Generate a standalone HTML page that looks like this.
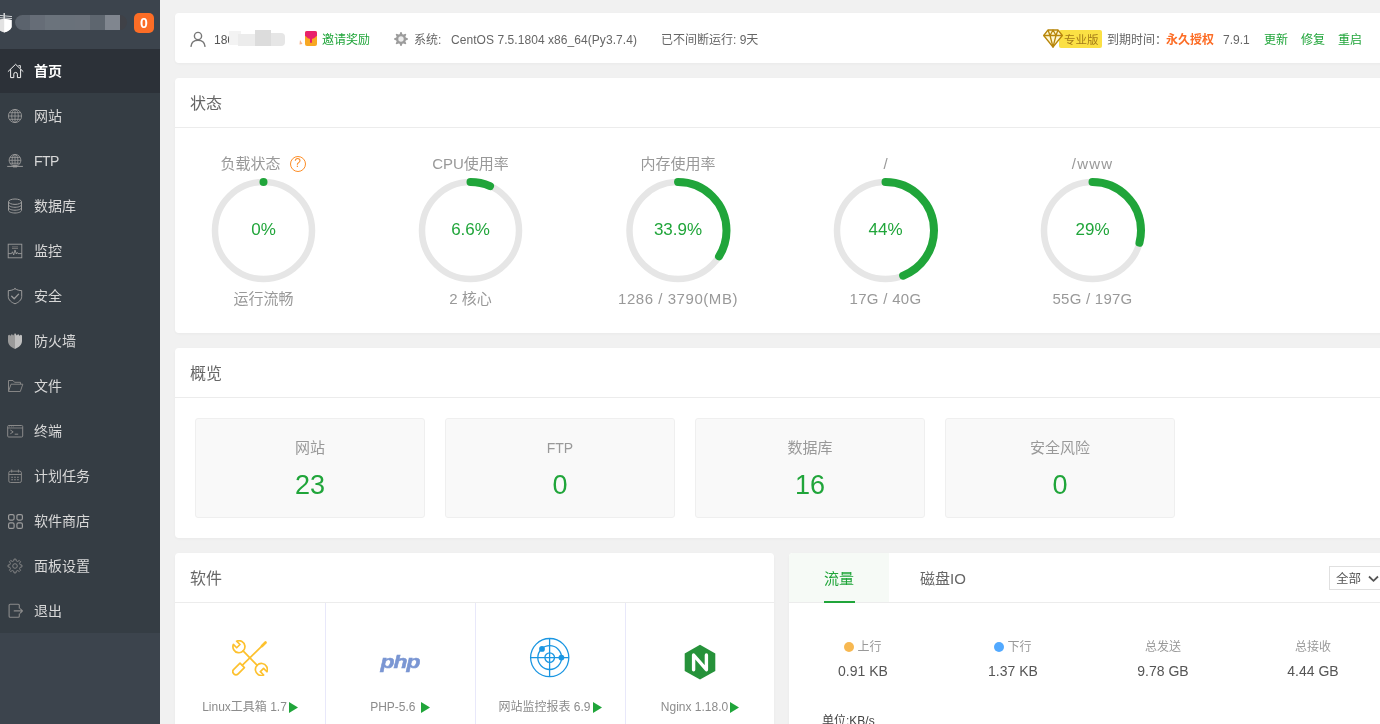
<!DOCTYPE html>
<html lang="zh-CN">
<head>
<meta charset="utf-8">
<title>宝塔Linux面板</title>
<style>
*{box-sizing:border-box;margin:0;padding:0}
html,body{width:1380px;height:724px;overflow:hidden;background:#f1f1f1}
body{font-family:"Liberation Sans","Noto Sans CJK SC",sans-serif;font-size:12px;color:#666;position:relative}
a{text-decoration:none;color:inherit}
.abs{position:absolute}
/* sidebar */
#side{position:absolute;left:0;top:0;width:160px;height:724px;background:#3c444d}
#side .hd{position:absolute;left:0;top:0;width:160px;height:49px;background:#3c444d}
#side ul{position:absolute;left:0;top:49px;width:160px;list-style:none;background:#353d44;height:584px}
#side li{height:44px;margin-bottom:1px;line-height:44px;position:relative;color:#d8d8d8;font-size:14px;padding-left:34px;white-space:nowrap}
#side li.on{background:#2c3138;color:#fff;font-weight:bold}
#side li svg{position:absolute;left:7px;top:14px;width:16px;height:16px;overflow:visible}
#side .hd i{position:absolute;top:0;height:15px;display:block}
.badge{position:absolute;left:134px;top:13px;width:20px;height:20px;border-radius:5px;background:#fc6d26;color:#fff;font-weight:bold;font-size:14px;line-height:20px;text-align:center}
/* cards */
.card{position:absolute;background:#fff;border-radius:4px;box-shadow:0 1px 3px rgba(0,0,0,.035)}
.card .tt{position:absolute;left:0;top:0;right:0;height:50px;border-bottom:1px solid #ececec;font-size:16px;color:#666;line-height:52px;padding-left:15px}
.g{color:#20a53a}
.t12{font-size:12px;white-space:nowrap;color:#666}
.t12.g{color:#20a53a}

.gt,.gb,.gp{position:absolute;width:200px;text-align:center;white-space:nowrap}
.gt{font-size:15px;color:#999;line-height:22px}
.gb{font-size:15px;color:#999;line-height:22px}
.gp{font-size:17px;color:#20a53a;line-height:30px}
.qm{position:absolute;left:126px;top:3px;width:16px;height:16px;border:1.300px solid #fc8d26;border-radius:50%;color:#fc8d26;font-size:12px;line-height:13.500px;text-align:center}
.ob{position:absolute;top:70px;width:230px;height:100px;background:#f9f9f9;border:1px solid #efefef;border-radius:3px;text-align:center}
.ob .a{font-size:15px;color:#999;line-height:20px;margin-top:19px}
.ob .b{font-size:27px;color:#20a53a;line-height:30px;margin-top:12px}

.sc{position:absolute;top:50px;width:151px;height:250px;border-right:1px solid #e8e8fa}
.sn{position:absolute;left:0;top:95px;width:150px;text-align:center;font-size:12px;line-height:18px;color:#8c8c8c;white-space:nowrap}
.tri{display:inline-block;vertical-align:-1.500px;margin-left:2px}
.nc{position:absolute;top:85px;width:148px;text-align:center;white-space:nowrap}
.nc .a{font-size:12px;line-height:18px;color:#999}
.nc .a i{display:inline-block;width:10px;height:10px;border-radius:50%;margin-right:3px;vertical-align:-0.500px}
.nc .b{font-size:14px;line-height:20px;color:#555;margin-top:4.500px}
</style>
</head>
<body><div id="wrap" style="position:absolute;left:0;top:0;width:1380px;height:724px;will-change:transform">
<div id="side">
  <div class="hd">
    <svg class="abs" style="left:0;top:13px" width="12" height="20" viewBox="0 0 12 20"><path d="M-4 6.800l8.200-1 7.400 1.200v6.500c0 2.600-3.300 4.700-7.400 6-4.100-1.300-8.200-3.400-8.200-6z" fill="#e2e2e2"/><path d="M4.200 5.800l7.400 1.200v6.500c0 2.600-3.300 4.700-7.400 6z" fill="#fff"/><path d="M4.200 0v6" stroke="#f0f0f0" stroke-width="1.300" fill="none"/><path d="M-2 2.200l14 1.400M-2 4.600l14 1" stroke="#cfd2d5" stroke-width="1" fill="none"/></svg>
    <div class="abs" style="left:15px;top:15px;width:112px;height:15px;border-radius:8px;overflow:hidden;background:#3f4147">
      <i style="left:0;width:15px;background:#5b636d"></i><i style="left:15px;width:15px;background:#666d77"></i><i style="left:30px;width:15px;background:#6b737c"></i><i style="left:45px;width:15px;background:#69717a"></i><i style="left:60px;width:15px;background:#6a717a"></i><i style="left:75px;width:15px;background:#5e666f"></i><i style="left:90px;width:15px;background:#80868f"></i>
    </div>
  </div>
  <div class="badge">0</div>
  <ul>
    <li class="on"><svg viewBox="0 0 16 16" fill="none" stroke="#f2f2f2" stroke-width="1" stroke-linejoin="round" stroke-linecap="round"><path d="M1.200 8.400L8.600 1.300 16 8.400"/><path d="M3.600 6.600v8h3.200v-3.400a1.800 1.800 0 0 1 3.600 0v3.400h3.200v-8"/><path d="M11.800 2.600h1.600v2.200" stroke-width=".9"/></svg>首页</li>
    <li><svg viewBox="0 0 16 16" fill="none" stroke="#9b9b9b" stroke-width=".85"><circle cx="8" cy="8" r="6.600"/><ellipse cx="8" cy="8" rx="3.300" ry="6.600"/><path d="M8 1.400v13.200M1.400 8h13.200M2.400 4.700h11.200M2.400 11.300h11.200"/></svg>网站</li>
    <li><svg viewBox="0 0 16 16" fill="none" stroke="#9b9b9b" stroke-width=".85"><circle cx="8" cy="7.300" r="5.900"/><ellipse cx="8" cy="7.300" rx="2.900" ry="5.900"/><path d="M8 1.400v11.800M2.100 7.300h11.800M3 4.400h10M3 10.200h10"/><path d="M.2 13.400h15.700" stroke-width="1"/><rect x="6" y="12.400" width="4" height="2" fill="#9b9b9b" stroke="none"/></svg><span style="letter-spacing:-.6px">FTP</span></li>
    <li><svg viewBox="0 0 16 16" fill="none" stroke="#9b9b9b" stroke-width="1"><ellipse cx="8" cy="3.700" rx="6.500" ry="2.700"/><path d="M1.500 3.700v8.600c0 1.500 2.900 2.700 6.500 2.700s6.500-1.200 6.500-2.700V3.700"/><path d="M1.500 6.600c0 1.500 2.900 2.700 6.500 2.700s6.500-1.200 6.500-2.700M1.500 9.500c0 1.500 2.900 2.700 6.500 2.700s6.500-1.200 6.500-2.700"/></svg>数据库</li>
    <li><svg viewBox="0 0 16 16" fill="none" stroke="#9b9b9b" stroke-width=".9"><rect x="1.200" y="1.200" width="13.600" height="13.600"/><path d="M1.200 10.600h3.300l1-1.800 1.200 3.200 1.300-5 1.300 4 .9-1.600.8 1.200h3.800" stroke-linejoin="round"/><path d="M5 3.900h6M5 5.500h6" stroke="#777"/></svg>监控</li>
    <li><svg viewBox="0 0 16 16" fill="none" stroke="#9b9b9b" stroke-width="1" stroke-linejoin="round" stroke-linecap="round"><path d="M8 .7C6 2.100 3.500 2.600 1.300 2.600v5.900c0 3.500 3.200 6 6.700 7.300 3.500-1.300 6.700-3.800 6.700-7.300V2.600C12.500 2.600 10 2.100 8 .7z"/><path d="M4.700 8.300l2.500 2.400 4.400-4.600" stroke-width="1.300"/></svg>安全</li>
    <li><svg viewBox="0 0 16 16"><path d="M8 0v16C4 14.200 1 11.700 1 8V2.600l1.300-.9 1.200 1 1.300-1.600 1.400 1.300z" fill="#9a9a9a"/><path d="M8 0v16c4-1.800 7-4.300 7-8V2.600l-1.300-.9-1.200 1-1.300-1.600-1.400 1.300z" fill="#bfbfbf"/></svg>防火墙</li>
    <li><svg viewBox="0 0 16 16" fill="none" stroke="#858585" stroke-width="1" stroke-linejoin="round"><path d="M1.500 13.500v-11H6l1.500 1.800h6V6.200"/><path d="M1.500 13.500L4 6.200h11.800l-2.500 7.300z"/></svg>文件</li>
    <li><svg viewBox="0 0 16 16" fill="none" stroke="#8a8a8a" stroke-width="1" stroke-linejoin="round"><rect x=".7" y="2.500" width="15" height="11.500" rx="1"/><path d="M.7 5h15" stroke-width=".8"/><path d="M3.300 7l2.900 1.900-2.900 1.900M7.700 11.200h3.500" stroke-width="1"/><path d="M2.200 3.800h.8M4 3.800h.8M5.800 3.800h.8" stroke-width=".7"/></svg>终端</li>
    <li><svg viewBox="0 0 16 16" fill="none" stroke="#858585" stroke-width="1"><rect x="1.800" y="3.200" width="12.600" height="11.300" rx="1.600"/><path d="M4.700 1.600v3M11.400 1.600v3M1.800 6.500h12.600" /><path d="M4.200 9.200h1.800M7.100 9.200h1.800M10 9.200h1.800M4.200 11.800h1.800M7.100 11.800h1.800M10 11.800h1.800" stroke-width="1.100"/></svg>计划任务</li>
    <li><svg viewBox="0 0 16 16" fill="none" stroke="#9b9b9b" stroke-width="1.200"><rect x="1.600" y="1.600" width="5.500" height="5.500" rx="1.500"/><rect x="9.900" y="1.600" width="5.500" height="5.500" rx="1.500"/><rect x="1.600" y="9.900" width="5.500" height="5.500" rx="1.500"/><rect x="9.900" y="9.900" width="5.500" height="5.500" rx="1.500"/></svg>软件商店</li>
    <li><svg viewBox="0 0 16 16" fill="none" stroke="#8a8a8a" stroke-width=".9" stroke-linejoin="round"><path d="M7.07 1.06 L8.93 1.06 L9.24 2.85 L10.77 3.48 L12.25 2.44 L13.56 3.75 L12.52 5.23 L13.15 6.76 L14.94 7.07 L14.94 8.93 L13.15 9.24 L12.52 10.77 L13.56 12.25 L12.25 13.56 L10.77 12.52 L9.24 13.15 L8.93 14.94 L7.07 14.94 L6.76 13.15 L5.23 12.52 L3.75 13.56 L2.44 12.25 L3.48 10.77 L2.85 9.24 L1.06 8.93 L1.06 7.07 L2.85 6.76 L3.48 5.23 L2.44 3.75 L3.75 2.44 L5.23 3.48 L6.76 2.85z"/><circle cx="8" cy="8" r="2.300"/></svg>面板设置</li>
    <li><svg viewBox="0 0 16 16" fill="none" stroke="#8a8a8a" stroke-width="1.100" stroke-linejoin="round" stroke-linecap="round"><path d="M12.300 5.200V2.300a1 1 0 0 0-1-1H3.100a1 1 0 0 0-1 1v11a1 1 0 0 0 1 1h8.200a1 1 0 0 0 1-1v-2.600"/><path d="M7.200 7.900h8M13.400 5.800l2.100 2.100-2.100 2.100"/></svg>退出</li>
  </ul>
</div>

<!-- top info bar -->
<div class="card" id="topbar" style="left:175px;top:13px;width:1300px;height:50px">
  <svg class="abs" style="left:15px;top:18px" width="16" height="16" viewBox="0 0 16 16" fill="none" stroke="#777" stroke-width="1.4" stroke-linecap="round"><circle cx="8" cy="5" r="3.6"/><path d="M1 15.3c.5-4 3.4-6 7-6s6.500 2 7 6"/></svg>
  <span class="abs t12" style="left:39px;top:0;line-height:55px;color:#555">186</span>
  <div class="abs" style="left:54px;top:18px;width:12px;height:14px;background:#f3f3f3"></div><div class="abs" style="left:63px;top:21px;width:17px;height:12px;background:#ececec"></div><div class="abs" style="left:80px;top:17px;width:16px;height:16px;background:#dcdcdc"></div><div class="abs" style="left:96px;top:20px;width:14px;height:13px;background:#e6e6e6;border-radius:0 4px 4px 0"></div>
  <svg class="abs" style="left:124px;top:18px" width="20" height="18" viewBox="0 0 20 18"><path d="M1 9l2.500 4-3 .5z" fill="#f8b38a"/><rect x="6" y="0" width="12" height="15" rx="2" fill="#f7a823"/><path d="M6 2a2 2 0 0 1 2-2h8a2 2 0 0 1 2 2v2.500c-2 2.500-4 3.500-6 3.500s-4-1-6-3.500z" fill="#e8216b"/><rect x="11" y="7" width="2" height="5" rx="1" fill="#e8216b"/></svg>
  <span class="abs t12 g" style="left:147px;top:0;line-height:55px">邀请奖励</span>
  <svg class="abs" style="left:219px;top:19px" width="14" height="14" viewBox="0 0 14 14"><polygon points="6.45,0.02 7.55,0.02 8.39,2.20 9.41,2.62 11.55,1.68 12.32,2.45 11.38,4.59 11.80,5.61 13.98,6.45 13.98,7.55 11.80,8.39 11.38,9.41 12.32,11.55 11.55,12.32 9.41,11.38 8.39,11.80 7.55,13.98 6.45,13.98 5.61,11.80 4.59,11.38 2.45,12.32 1.68,11.55 2.62,9.41 2.20,8.39 0.02,7.55 0.02,6.45 2.20,5.61 2.62,4.59 1.68,2.45 2.45,1.68 4.59,2.62 5.61,2.20" fill="#9c9c9c"/><circle cx="7" cy="7" r="2.700" fill="#ececec"/></svg>
  <span class="abs t12" style="left:239px;top:0;line-height:55px">系统:</span>
  <span class="abs t12" style="left:276px;top:0;line-height:55px;letter-spacing:.06px">CentOS 7.5.1804 x86_64(Py3.7.4)</span>
  <span class="abs t12" style="left:486px;top:0;line-height:55px">已不间断运行: 9天</span>

  <div class="abs" style="left:884px;top:17px;width:43px;height:18px;background:#fbe044;border-radius:2px"></div>
  <svg class="abs" style="left:868px;top:16px" width="20" height="19" viewBox="0 0 20 19" fill="#fff7d0" stroke="#b8860b" stroke-width="1.300" stroke-linejoin="round"><path d="M5 1h10l4.300 5.500L10 18 .7 6.500z"/><path d="M.7 6.500h18.600M5 1l2 5.500L10 18l3-11.500L15 1M7 6.500L10 1l3 5.500" fill="none"/></svg>
  <span class="abs t12" style="left:889px;top:0;line-height:55px;color:#a37a18;font-size:11.500px">专业版</span>
  <span class="abs t12" style="left:932px;top:0;line-height:55px">到期时间：</span>
  <span class="abs t12" style="left:991px;top:0;line-height:55px;color:#fc6d26;font-weight:bold">永久授权</span>
  <span class="abs t12" style="left:1048px;top:0;line-height:55px">7.9.1</span>
  <span class="abs t12 g" style="left:1089px;top:0;line-height:55px">更新</span>
  <span class="abs t12 g" style="left:1126px;top:0;line-height:55px">修复</span>
  <span class="abs t12 g" style="left:1163px;top:0;line-height:55px">重启</span>
</div>

<!-- status -->
<div class="card" id="status" style="left:175px;top:78px;width:1300px;height:255px">
  <div class="tt">状态</div>
  <div class="gt" style="left:-11.5px;top:75px"><span style="margin-right:26px">负载状态</span><span class="qm">?</span></div>
  <svg class="abs" style="left:0;top:0" width="1205" height="255"><circle cx="88.5" cy="152.5" r="48.5" fill="none" stroke="#e6e6e6" stroke-width="6.500"/><circle cx="88.5" cy="104.0" r="4" fill="#20a53a"/></svg>
  <div class="gp" style="left:-11.5px;top:137px">0%</div>
  <div class="gb" style="left:-11.5px;top:210px">运行流畅</div>
  <div class="gt" style="left:195.5px;top:75px">CPU使用率</div>
  <svg class="abs" style="left:0;top:0" width="1205" height="255"><circle cx="295.5" cy="152.5" r="48.5" fill="none" stroke="#e6e6e6" stroke-width="6.500"/><circle cx="295.5" cy="152.5" r="48.5" fill="none" stroke="#20a53a" stroke-width="8" stroke-linecap="round" stroke-dasharray="20.11 304.73" transform="rotate(-90 295.5 152.5)"/></svg>
  <div class="gp" style="left:195.5px;top:137px">6.6%</div>
  <div class="gb" style="left:195.5px;top:210px">2 核心</div>
  <div class="gt" style="left:403px;top:75px">内存使用率</div>
  <svg class="abs" style="left:0;top:0" width="1205" height="255"><circle cx="503" cy="152.5" r="48.5" fill="none" stroke="#e6e6e6" stroke-width="6.500"/><circle cx="503" cy="152.5" r="48.5" fill="none" stroke="#20a53a" stroke-width="8" stroke-linecap="round" stroke-dasharray="103.30 304.73" transform="rotate(-90 503 152.5)"/></svg>
  <div class="gp" style="left:403px;top:137px">33.9%</div>
  <div class="gb" style="left:403px;top:210px;letter-spacing:.55px">1286 / 3790(MB)</div>
  <div class="gt" style="left:610.5px;top:75px">/</div>
  <svg class="abs" style="left:0;top:0" width="1205" height="255"><circle cx="710.5" cy="152.5" r="48.5" fill="none" stroke="#e6e6e6" stroke-width="6.500"/><circle cx="710.5" cy="152.5" r="48.5" fill="none" stroke="#20a53a" stroke-width="8" stroke-linecap="round" stroke-dasharray="134.08 304.73" transform="rotate(-90 710.5 152.5)"/></svg>
  <div class="gp" style="left:610.5px;top:137px">44%</div>
  <div class="gb" style="left:610.5px;top:210px;letter-spacing:.3px">17G / 40G</div>
  <div class="gt" style="left:817.5px;top:75px;letter-spacing:1.2px">/www</div>
  <svg class="abs" style="left:0;top:0" width="1205" height="255"><circle cx="917.5" cy="152.5" r="48.5" fill="none" stroke="#e6e6e6" stroke-width="6.500"/><circle cx="917.5" cy="152.5" r="48.5" fill="none" stroke="#20a53a" stroke-width="8" stroke-linecap="round" stroke-dasharray="88.37 304.73" transform="rotate(-90 917.5 152.5)"/></svg>
  <div class="gp" style="left:817.5px;top:137px">29%</div>
  <div class="gb" style="left:817.5px;top:210px;letter-spacing:.25px">55G / 197G</div>
</div>

<!-- overview -->
<div class="card" id="over" style="left:175px;top:348px;width:1300px;height:190px">
  <div class="tt">概览</div>
  <div class="ob" style="left:20px"><div class="a">网站</div><div class="b">23</div></div>
  <div class="ob" style="left:270px"><div class="a" style="font-size:14px">FTP</div><div class="b">0</div></div>
  <div class="ob" style="left:520px"><div class="a">数据库</div><div class="b">16</div></div>
  <div class="ob" style="left:770px"><div class="a">安全风险</div><div class="b">0</div></div>
</div>

<!-- software -->
<div class="card" id="soft" style="left:175px;top:553px;width:599px;height:300px">
  <div class="tt">软件</div>
  <div class="sc" style="left:0">
    <svg class="abs" style="left:57px;top:37px" width="36" height="36" viewBox="0 0 36 36" fill="none" stroke="#fdc12e" stroke-width="1.700" stroke-linecap="round" stroke-linejoin="round"><path d="M29.600 6.400L10.400 25.200"/><path d="M33.500 2.500L30 6" stroke-width="2.700"/><path d="M-3.100 0H3.100V8.800a3.100 3.100 0 0 1-6.200 0z" transform="translate(10.200 25.400) rotate(45)"/><path d="M11.100 10.900L25.200 25.300"/><path d="M-2.300 -5.500V-.8H2.300V-5.500A6 6 0 1 1 -2.300 -5.500z" transform="translate(6.900 6.700) rotate(-45)"/><path d="M-2.300 -5.500V-.8H2.300V-5.500A6 6 0 1 1 -2.300 -5.500z" transform="translate(29.400 29.500) rotate(135)"/></svg>
    <div class="sn">Linux工具箱 1.7<svg class="tri" width="9" height="11" viewBox="0 0 9 11"><path d="M0 0l9 5.500L0 11z" fill="#20a53a"/></svg></div>
  </div>
  <div class="sc" style="left:150px">
    <div class="abs" style="left:0;top:49px;width:150px;text-align:center;font:italic bold 18px/20px 'Liberation Sans',sans-serif;color:#7a96d3;letter-spacing:-.8px;-webkit-text-stroke:.5px #7a96d3;transform:scaleX(1.27)">php</div>
    <div class="sn">PHP-5.6 <svg class="tri" width="9" height="11" viewBox="0 0 9 11"><path d="M0 0l9 5.500L0 11z" fill="#20a53a"/></svg></div>
  </div>
  <div class="sc" style="left:300px">
    <svg class="abs" style="left:54px;top:34px" width="42" height="42" viewBox="0 0 42 42" fill="none" stroke="#1a96e2" stroke-width="1.300"><circle cx="20.700" cy="20.600" r="19.100"/><circle cx="20.700" cy="20.600" r="11.900"/><circle cx="20.700" cy="20.600" r="4.800"/><path d="M20.600 1.500v38.200M1.600 20.600h38.200"/><circle cx="13" cy="11.900" r="2.900" fill="#1a96e2" stroke="none"/><circle cx="32.400" cy="20.600" r="2.900" fill="#1a96e2" stroke="none"/></svg>
    <div class="sn">网站监控报表 6.9<svg class="tri" width="9" height="11" viewBox="0 0 9 11"><path d="M0 0l9 5.500L0 11z" fill="#20a53a"/></svg></div>
  </div>
  <div class="sc" style="left:450px;border-right:0">
    <svg class="abs" style="left:59px;top:41px" width="32" height="37" viewBox="0 0 32 37"><path d="M16 .8l15.300 8.700v17.400L16 35.600.7 26.900V9.500z" fill="#26923a"/><path d="M9.600 25.700V11l12.800 14.700V11" fill="none" stroke="#fff" stroke-width="3.400" stroke-linecap="round" stroke-linejoin="round"/></svg>
    <div class="sn">Nginx 1.18.0<svg class="tri" width="9" height="11" viewBox="0 0 9 11"><path d="M0 0l9 5.500L0 11z" fill="#20a53a"/></svg></div>
  </div>
</div>

<!-- traffic -->
<div class="card" id="net" style="left:789px;top:553px;width:700px;height:300px">
  <div class="abs" style="left:0;top:0;width:700px;height:50px;border-bottom:1px solid #ececec"></div>
  <div class="abs" style="left:0;top:0;width:100px;height:49px;background:#f6faf6;border-radius:4px 0 0 0"></div>
  <div class="abs g" style="left:0;top:0;width:100px;text-align:center;font-size:15px;line-height:52px">流量</div>
  <div class="abs" style="left:34.500px;top:48px;width:31px;height:2px;background:#20a53a"></div>
  <div class="abs" style="left:131px;top:0;font-size:15px;line-height:52px;color:#666;white-space:nowrap">磁盘IO</div>
  <div class="abs" style="left:540px;top:13px;width:80px;height:24px;border:1px solid #e0e0e0;background:#fff"></div>
  <div class="abs" style="left:547px;top:13px;font-size:12.500px;line-height:26px;color:#555">全部</div>
  <svg class="abs" style="left:579px;top:22px" width="11" height="8" viewBox="0 0 11 8" fill="none" stroke="#555" stroke-width="1.800"><path d="M1 1.500l4.500 4.300L10 1.500"/></svg>

  <div class="nc" style="left:0"><div class="a"><i style="background:#f7b851"></i>上行</div><div class="b">0.91 KB</div></div>
  <div class="nc" style="left:150px"><div class="a"><i style="background:#52a9ff"></i>下行</div><div class="b">1.37 KB</div></div>
  <div class="nc" style="left:300px"><div class="a">总发送</div><div class="b">9.78 GB</div></div>
  <div class="nc" style="left:450px"><div class="a">总接收</div><div class="b">4.44 GB</div></div>
  <div class="abs" style="left:33px;top:159px;font-size:12px;line-height:18px;color:#444;white-space:nowrap">单位:KB/s</div>
</div>
</div></body>
</html>
